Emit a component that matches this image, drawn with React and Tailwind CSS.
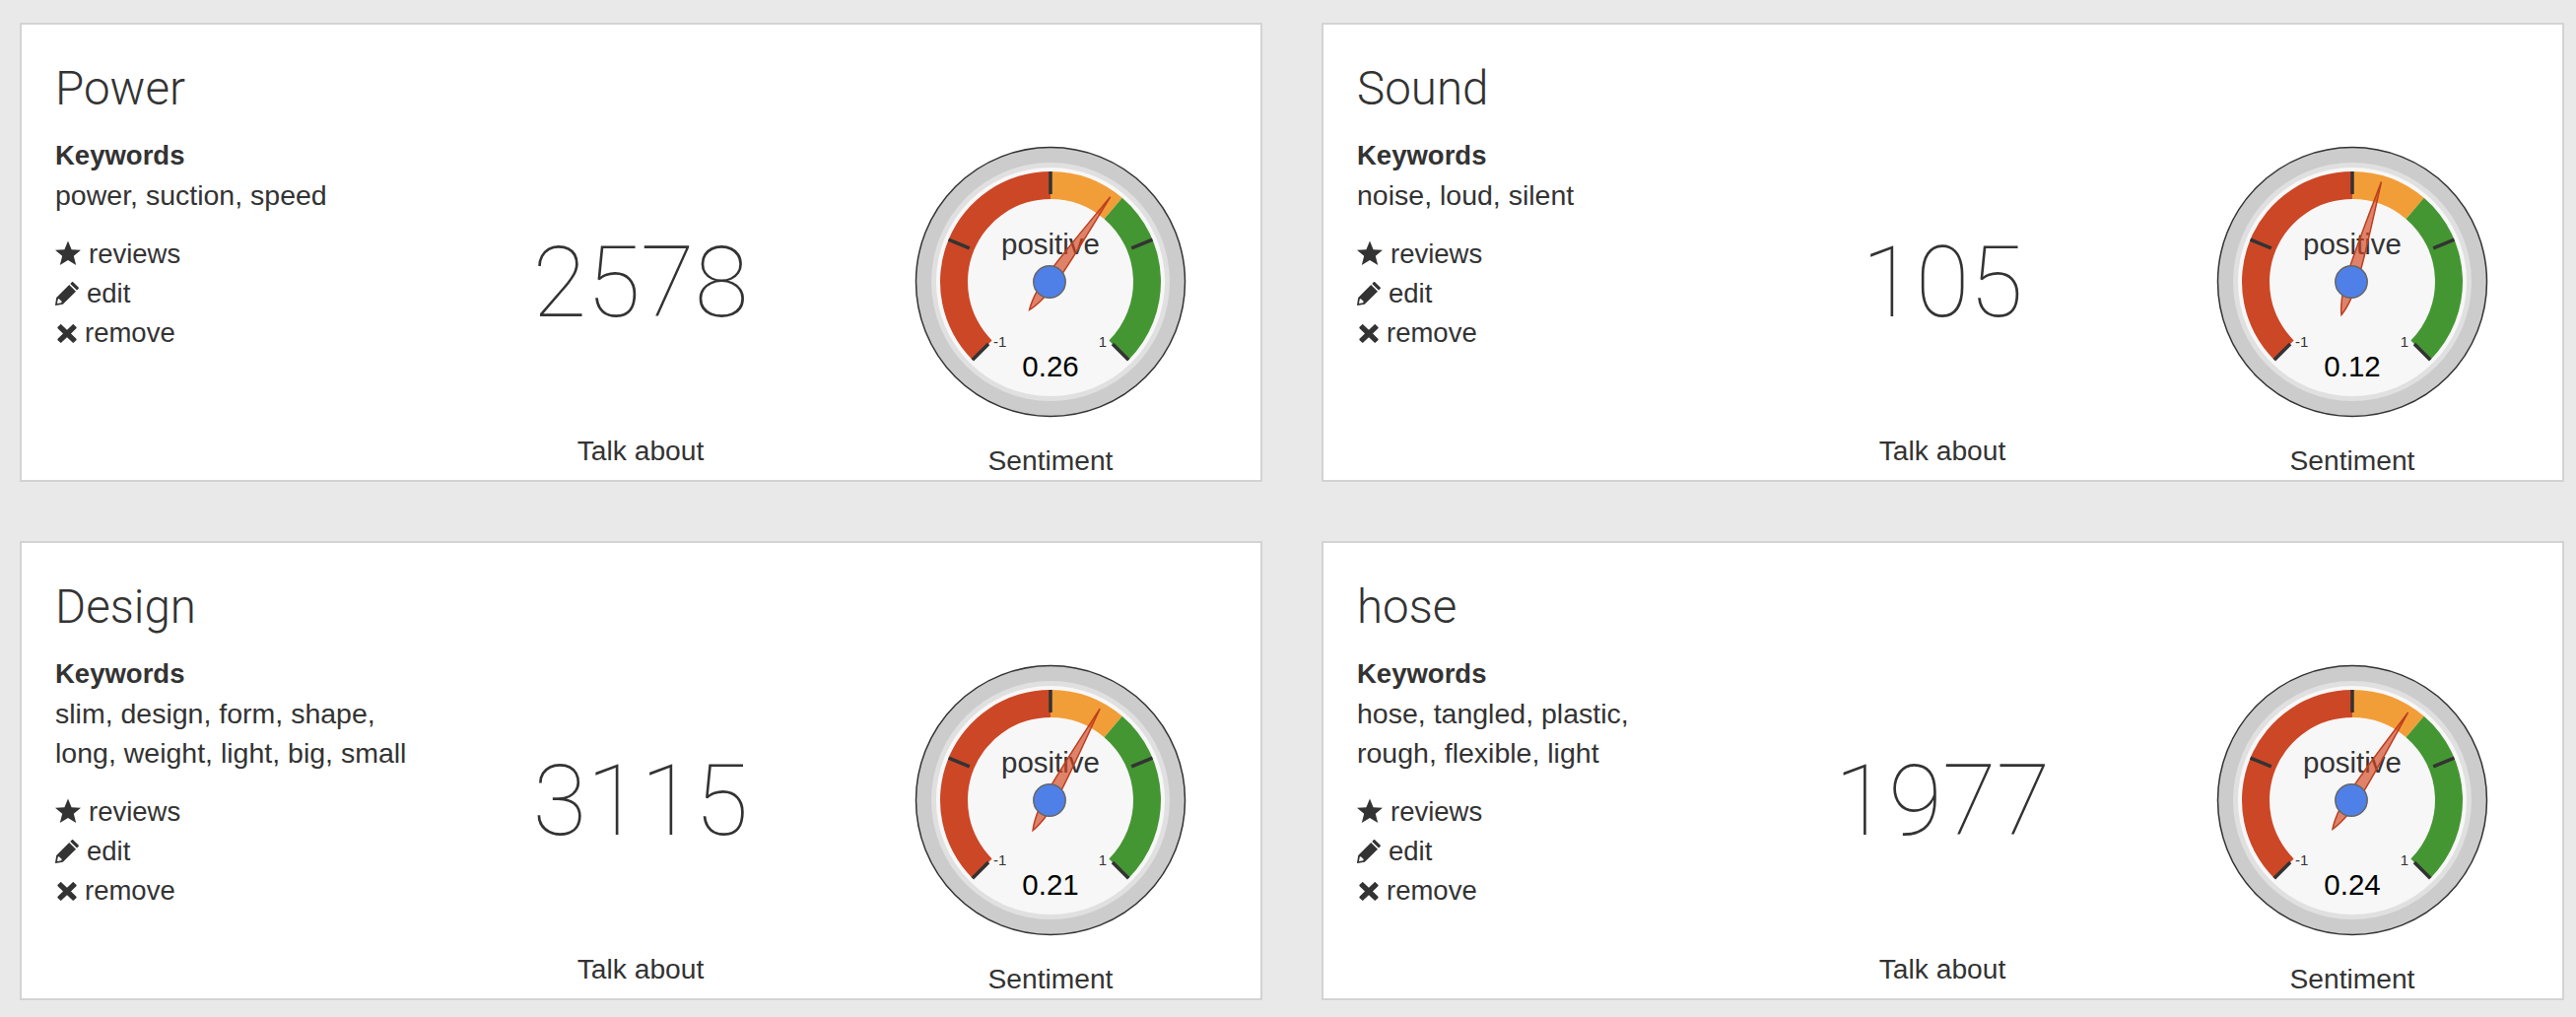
import React from "react";

const cards = [
  { title: "Power", kw: ["power, suction, speed"], count: 2578, value: 0.26 },
  { title: "Sound", kw: ["noise, loud, silent"], count: 105, value: 0.12 },
  { title: "Design", kw: ["slim, design, form, shape,", "long, weight, light, big, small"], count: 3115, value: 0.21 },
  { title: "hose", kw: ["hose, tangled, plastic,", "rough, flexible, light"], count: 1977, value: 0.24 },
];

const C = 140;
function polar(r, deg) {
  const a = (deg * Math.PI) / 180;
  return [C + r * Math.sin(a), C - r * Math.cos(a)];
}
function band(from, to, r1, r2) {
  const [a, b] = polar(r2, from);
  const [c, d] = polar(r2, to);
  const [e, f] = polar(r1, to);
  const [g, h] = polar(r1, from);
  const large = to - from > 180 ? 1 : 0;
  return `M${a} ${b}A${r2} ${r2} 0 ${large} 1 ${c} ${d}L${e} ${f}A${r1} ${r1} 0 ${large} 0 ${g} ${h}Z`;
}

function Gauge({ value }) {
  const ticks = [-135, -67.5, 0, 67.5, 135];
  return (
    <svg width="280" height="280" viewBox="0 0 280 280" className="block">
      <circle cx={C} cy={C} r="136.5" fill="#cccccc" stroke="#333333" strokeWidth="1.5" />
      <circle cx={C} cy={C} r="121" fill="#e0e0e0" />
      <circle cx={C} cy={C} r="116" fill="#f7f7f7" />
      <path d={band(-135, 0, 84, 112)} fill="#cc4726" />
      <path d={band(0, 40.5, 84, 112)} fill="#f29e38" />
      <path d={band(40.5, 135, 84, 112)} fill="#449632" />
      {ticks.map((t) => {
        const [x1, y1] = polar(89, t);
        const [x2, y2] = polar(112, t);
        return <line key={t} x1={x1} y1={y1} x2={x2} y2={y2} stroke="#333333" strokeWidth="3.5" />;
      })}
      <text x={C} y="112" textAnchor="middle" fontSize="29.5" fill="#333333">positive</text>
      <text x="82" y="206" fontSize="15" fill="#333333">-1</text>
      <text x="193" y="206" fontSize="15" textAnchor="middle" fill="#333333">1</text>
      <text x={C} y="236" textAnchor="middle" fontSize="29.5" fill="#000000">{value.toFixed(2)}</text>
      <g transform={`rotate(${value * 135 + 0.5} ${C - 1} ${C})`}>
        <path
          transform={`translate(${C - 1} ${C})`}
          d="M0 -106C-2.2 -76 -6 -30 -6 0C-6 13 -3 28 0 35C3 28 6 13 6 0C6 -30 2.2 -76 0 -106Z"
          fill="#d2431e"
          fillOpacity="0.65"
          stroke="#bd3f1f"
          strokeWidth="1.5"
        />
      </g>
      <circle cx={C - 1} cy={C} r="16.2" fill="#4f80e8" stroke="#666666" strokeWidth="1.5" />
    </svg>
  );
}

const Star = () => (
  <svg width="26" height="26" viewBox="0 0 26 26" className="mr-2 mb-[3px] shrink-0" fill="#333333">
    <path d="M13 0.5L16.6 9.2L26 9.8L18.8 15.8L21.2 25L13 20L4.8 25L7.2 15.8L0 9.8L9.4 9.2Z" />
  </svg>
);
const Pencil = () => (
  <svg width="24" height="24" viewBox="0 0 24 24" className="mr-2 shrink-0" fill="#333333">
    <path d="M18.2 0.3L23.6 5.6C24 6 24 6.6 23.6 7L22 8.6L15.3 2L16.9 0.3C17.3 -0.1 17.8 -0.1 18.2 0.3Z" />
    <path fillRule="evenodd" d="M14.2 3L21 9.8L7.8 22.8L0.4 24C0.1 24 0 23.8 0 23.5L1.2 16ZM2.8 17.4L2 22L6.4 21.2L6.6 19.8L3.9 17.2Z" />
  </svg>
);
const Cross = () => (
  <svg width="20" height="19" viewBox="0 0 20 19" className="mr-2 ml-[2px] shrink-0" fill="#333333">
    <path d="M4.4 0.4L10 5.7L15.6 0.4C16 0 16.5 0 16.9 0.4L19.4 2.8C19.8 3.2 19.8 3.8 19.4 4.2L14 9.5L19.4 14.8C19.8 15.2 19.8 15.8 19.4 16.2L16.9 18.6C16.5 19 16 19 15.6 18.6L10 13.3L4.4 18.6C4 19 3.5 19 3.1 18.6L0.6 16.2C0.2 15.8 0.2 15.2 0.6 14.8L6 9.5L0.6 4.2C0.2 3.8 0.2 3.2 0.6 2.8L3.1 0.4C3.5 0 4 0 4.4 0.4Z" />
  </svg>
);

function Card({ title, kw, count, value }) {
  return (
    <div className="grid h-[466px] grid-cols-[408px_440px_1fr] border-2 border-[#d3d3d3] bg-white text-[#333333]">
      <div className="pl-[34px] pt-[35px]">
        <h2 className="font-['Roboto',sans-serif] text-[47.5px] leading-[60px] font-light">{title}</h2>
        <div className="mt-[18px] text-[27.5px] leading-[40px] font-bold">Keywords</div>
        {kw.map((k) => (
          <div key={k} className="text-[28.5px] leading-[40px]">{k}</div>
        ))}
        <ul className="mt-[20px] text-[27.5px] leading-[40px]">
          <li className="flex items-center"><Star />reviews</li>
          <li className="flex items-center"><Pencil />edit</li>
          <li className="flex items-center"><Cross />remove</li>
        </ul>
      </div>
      <div className="flex flex-col items-center pt-[202px]">
        <div className="font-['Roboto',sans-serif] text-[100px] leading-[120px] font-thin">{count}</div>
        <div className="mt-[90px] text-[28.2px] leading-[40px]">Talk about</div>
      </div>
      <div className="flex flex-col items-center pt-[121px] pr-[17px]">
        <Gauge value={value} />
        <div className="mt-[21px] text-[28.2px] leading-[40px]">Sentiment</div>
      </div>
    </div>
  );
}

export default function App() {
  return (
    <div className="min-h-[1032px] bg-[#e9e9e9] pt-[23px] pl-[20px] font-['Liberation_Sans',Arial,sans-serif]">
      <div className="grid w-[2582px] grid-cols-2 gap-x-[60px] gap-y-[60px]">
        {cards.map((c) => (
          <Card key={c.title} {...c} />
        ))}
      </div>
    </div>
  );
}
